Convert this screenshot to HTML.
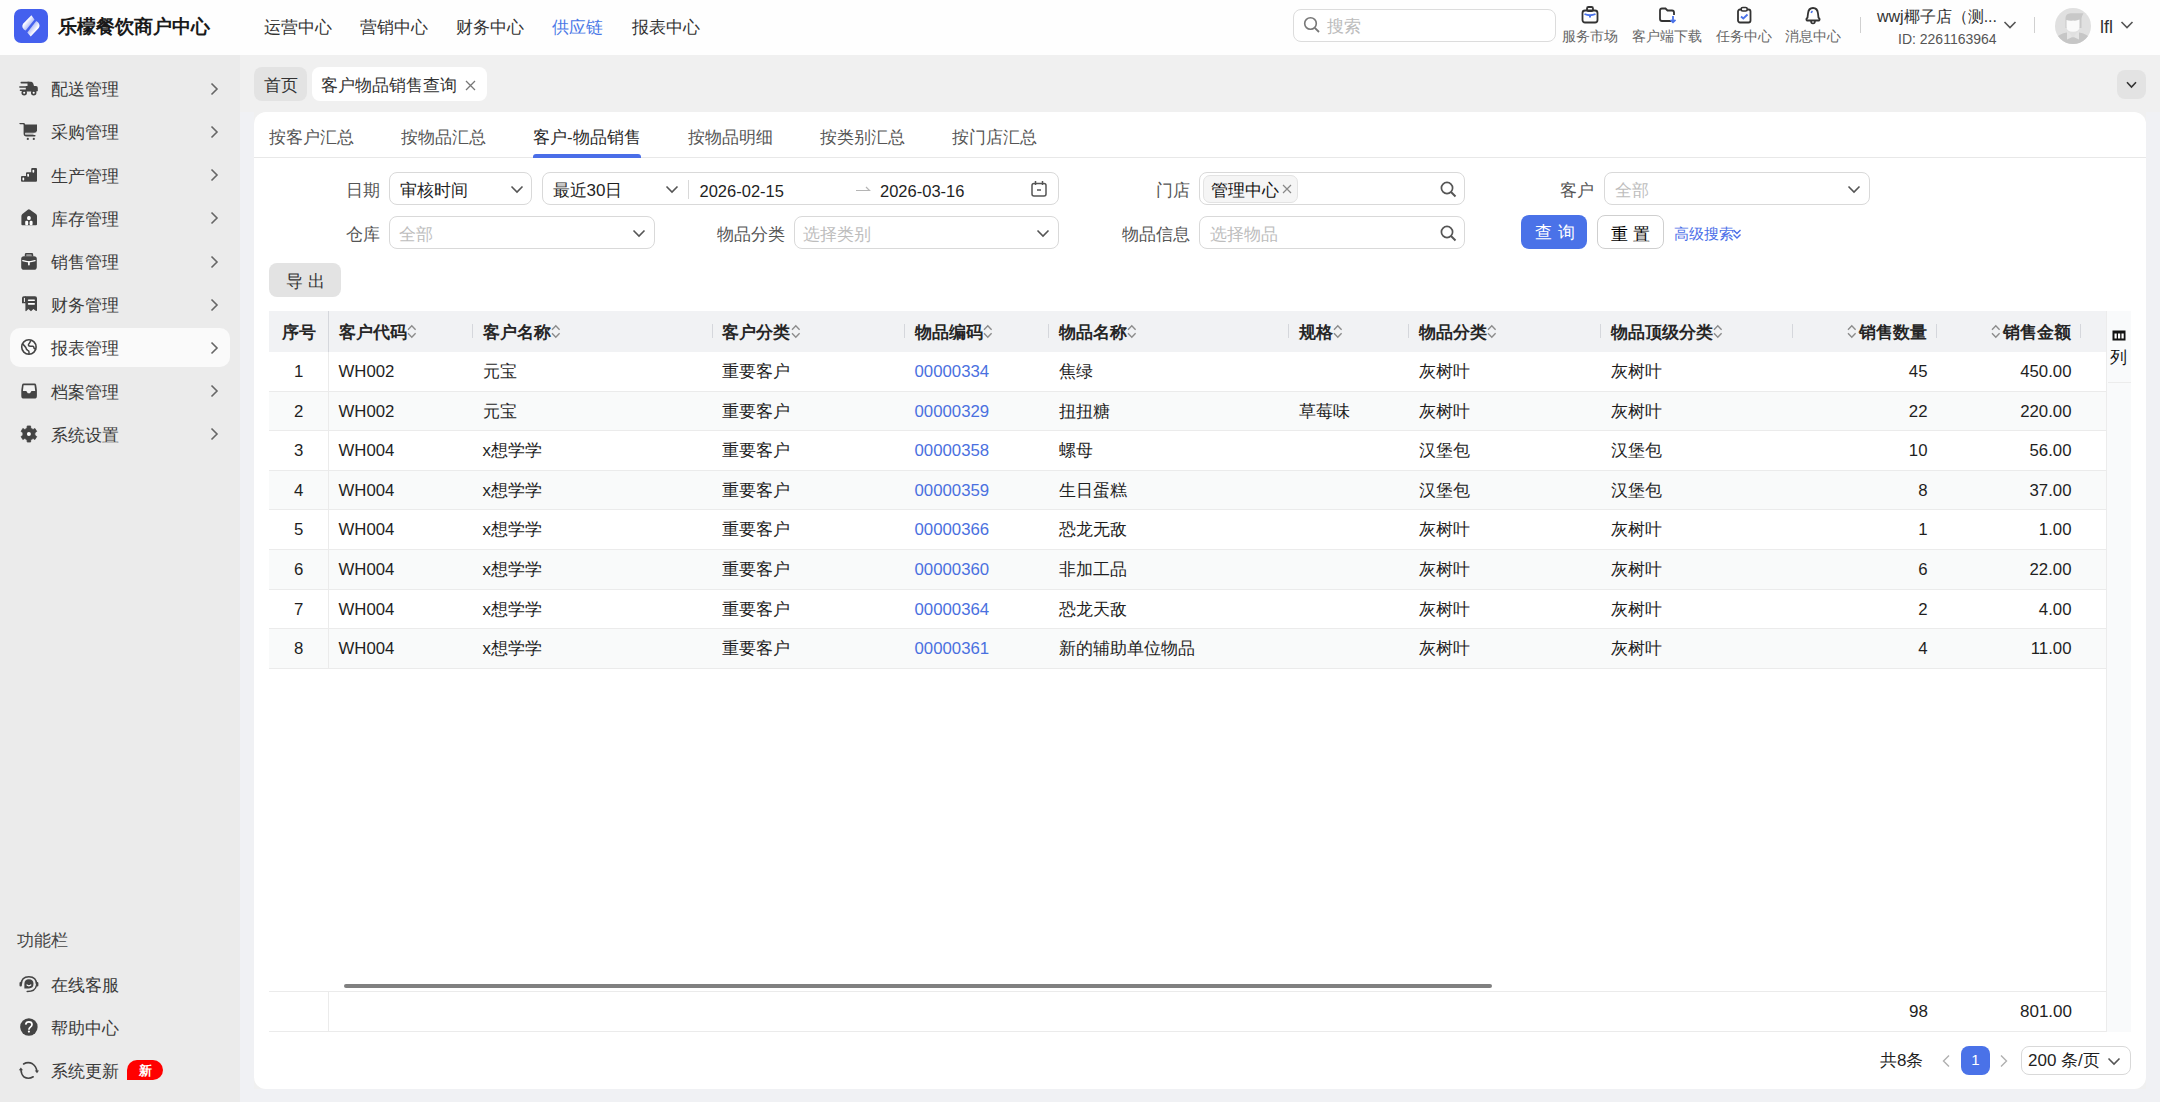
<!DOCTYPE html>
<html><head><meta charset="utf-8">
<style>
*{box-sizing:border-box;margin:0;padding:0}
html,body{width:2160px;height:1102px;overflow:hidden;font-family:"Liberation Sans",sans-serif;color:#1f1f1f;background:#f0f1f4}
.a{position:absolute;white-space:nowrap}
#hdr{position:absolute;left:0;top:0;width:2160px;height:55px;background:#fefefe}
#side{position:absolute;left:0;top:55px;width:240px;height:1047px;background:#ebebeb}
#tabbar{position:absolute;left:240px;top:55px;width:1920px;height:57px;background:#f0f0f0}
.nav{position:absolute;top:18px;font-size:17px;line-height:20px;color:#333}
.hi{position:absolute;top:5px;width:80px;text-align:center}
.hi svg{display:block;margin:0 auto}
.hi div{font-size:14.4px;line-height:16px;color:#666;margin-top:3px}
.mi{position:absolute;left:0;width:240px;height:40px}
.mi .t{position:absolute;left:51px;top:10.5px;font-size:17px;line-height:22px;color:#3a3a3a}
.mi svg.ic{position:absolute;left:19px;top:11px}
.mi svg.ch{position:absolute;left:207px;top:13px}
#card{position:absolute;left:254px;top:112px;width:1892px;height:977px;background:#fff;border-radius:12px}
.tab{position:absolute;top:16px;font-size:17px;line-height:20px;color:#555}
.lbl{position:absolute;font-size:17px;line-height:20px;color:#555;text-align:right}
.inp{position:absolute;height:33px;border:1px solid #d9d9d9;border-radius:8px;background:#fff}
.inp .v{position:absolute;left:10px;top:6px;font-size:17px;line-height:20px;color:#1f1f1f}
.inp .ph{position:absolute;left:9px;top:6px;font-size:17px;line-height:20px;color:#bdbdbd}
.inp svg{position:absolute}
.th{position:absolute;top:0;height:40px;font-size:17px;line-height:40px;font-weight:bold;color:#262626}
.sep{position:absolute;top:13px;width:1px;height:15px;background:#d5d7dc}
.row{position:absolute;left:0;width:1837px;height:39.6px;border-bottom:1px solid #ececec}
.row.e{background:#fafafa}
.c{position:absolute;top:0;line-height:39px;font-size:17px;color:#1f1f1f}
.c.n{font-size:16.5px}
.c.r{text-align:right}
.c.b{color:#4a70e0}
</style></head><body>
<div id="hdr">
  <svg class="a" style="left:14px;top:9px" width="34" height="34" viewBox="0 0 34 34">
    <defs><linearGradient id="g1" x1="0" y1="0" x2="1" y2="1"><stop offset="0.35" stop-color="#fff"/><stop offset="0.75" stop-color="#fff" stop-opacity="0.45"/></linearGradient>
    <linearGradient id="g2" x1="1" y1="1" x2="0" y2="0"><stop offset="0.35" stop-color="#fff"/><stop offset="0.75" stop-color="#fff" stop-opacity="0.45"/></linearGradient></defs>
    <rect width="34" height="34" rx="7" fill="#4460ee"/>
    <path d="M17.4 6.3 L20.5 10.6 L11.7 21.6 C8.5 20 7.2 17 9.6 14.2 Z" fill="url(#g1)"/>
    <path d="M16.7 27.5 L13.3 23.5 L22.2 12 C25.4 13.8 26.6 17 24.3 19.6 Z" fill="url(#g2)"/>
  </svg>
  <div class="a" style="left:58px;top:15px;font-size:19px;line-height:24px;font-weight:bold;color:#1a1a1a">乐檬餐饮商户中心</div>
  <div class="nav" style="left:264px">运营中心</div>
  <div class="nav" style="left:360px">营销中心</div>
  <div class="nav" style="left:456px">财务中心</div>
  <div class="nav" style="left:552px;color:#4a78e6">供应链</div>
  <div class="nav" style="left:632px">报表中心</div>

  <div class="a" style="left:1293px;top:9px;width:263px;height:33px;border:1px solid #dcdcdc;border-radius:8px;background:#fff"></div>
  <svg class="a" style="left:1303px;top:16px" width="18" height="18" viewBox="0 0 18 18"><circle cx="7.5" cy="7.5" r="5.8" fill="none" stroke="#777" stroke-width="1.6"/><path d="M11.8 11.8 L16 16" stroke="#777" stroke-width="1.8"/></svg>
  <div class="a" style="left:1327px;top:17px;font-size:17px;line-height:20px;color:#bbb">搜索</div>

  <div class="hi" style="left:1550px">
    <svg width="20" height="20" viewBox="0 0 20 20"><rect x="2.5" y="5.5" width="15" height="12" rx="2.5" fill="none" stroke="#333" stroke-width="1.8"/><rect x="7" y="2" width="6" height="4" rx="1.5" fill="none" stroke="#333" stroke-width="1.8"/><path d="M4.5 9 Q10 11.5 15.5 9" fill="none" stroke="#4a72e8" stroke-width="1.8"/><path d="M10 10.5 V12.5" stroke="#4a72e8" stroke-width="2"/></svg>
    <div>服务市场</div></div>
  <div class="hi" style="left:1627px">
    <svg width="20" height="20" viewBox="0 0 20 20"><path d="M14 16 H5 Q3 16 3 14 V5.5 Q3 3.5 5 3.5 H8.5 L10.5 5.5 H15 Q17 5.5 17 7.5 V10" fill="none" stroke="#333" stroke-width="1.8"/><path d="M16 11 V17 M13.5 14.8 L16 17.3 L18.5 14.8" fill="none" stroke="#4a72e8" stroke-width="1.8"/></svg>
    <div>客户端下载</div></div>
  <div class="hi" style="left:1704px">
    <svg width="20" height="20" viewBox="0 0 20 20"><rect x="4" y="4.5" width="12.5" height="13" rx="2" fill="none" stroke="#333" stroke-width="1.8"/><rect x="7.2" y="2.5" width="6" height="3.5" rx="1.5" fill="#fff" stroke="#333" stroke-width="1.6"/><path d="M7 11.5 L9.3 13.5 L13.5 9.5" fill="none" stroke="#4a72e8" stroke-width="1.8"/></svg>
    <div>任务中心</div></div>
  <div class="hi" style="left:1773px">
    <svg width="20" height="20" viewBox="0 0 20 20"><path d="M10 3 Q14.5 3 15 8.5 L15.5 12.5 Q17.5 14.5 16 15.5 H4 Q2.5 14.5 4.5 12.5 L5 8.5 Q5.5 3 10 3 Z" fill="none" stroke="#333" stroke-width="1.8"/><path d="M8 16 Q8 18.5 10 18.5 Q12 18.5 12 16" fill="none" stroke="#333" stroke-width="1.6"/><path d="M9.5 6 Q8.5 6.8 8.3 8" fill="none" stroke="#4a72e8" stroke-width="1.6"/></svg>
    <div>消息中心</div></div>
  <div class="a" style="left:1860px;top:17px;width:1px;height:16px;background:#d0d0d0"></div>
  <div class="a" style="left:1877px;top:7px;font-size:16px;line-height:20px;color:#333">wwj椰子店（测...</div>
  <div class="a" style="left:1898px;top:31px;font-size:14px;line-height:16px;color:#555">ID: 2261163964</div>
  <svg class="a" style="left:2003px;top:20px" width="14" height="10" viewBox="0 0 14 10"><path d="M1.5 2 L7 7.5 L12.5 2" fill="none" stroke="#555" stroke-width="1.6"/></svg>
  <div class="a" style="left:2034px;top:17px;width:1px;height:16px;background:#d0d0d0"></div>
  <svg class="a" style="left:2055px;top:8px" width="36" height="36" viewBox="0 0 36 36"><defs><clipPath id="av"><circle cx="18" cy="18" r="18"/></clipPath></defs><g clip-path="url(#av)"><rect width="36" height="36" fill="#e0e0e0"/>
<path d="M10.5 20 V10 Q10.8 5.5 15.5 5.2 H28.5 Q27 7.5 26.5 10.5 V20 Z" fill="#c8c8c8"/>
<path d="M11.5 12 Q14.5 13.2 18 12.6 Q21.5 13.2 24.5 11.6 V19 Q24.5 23.8 18 23.8 Q11.5 23.8 11.5 19 Z" fill="#fafafa"/>
<path d="M0 36 V31 Q4 25.5 12 24.5 L18 29.5 L24 24.5 Q32 25.5 36 31 V36 Z" fill="#c6c6c6"/>
<path d="M12 22.5 L18 29.5 L24 22.5 V31.5 L18 28.8 L12 31.5 Z" fill="#e4e4e4"/></g></svg>
  <div class="a" style="left:2100px;top:17px;font-size:18px;line-height:20px;color:#333">lfl</div>
  <svg class="a" style="left:2120px;top:20px" width="14" height="10" viewBox="0 0 14 10"><path d="M1.5 2 L7 7.5 L12.5 2" fill="none" stroke="#555" stroke-width="1.6"/></svg>
</div>

<div id="side">
<div class="mi" style="top:13.5px"><svg class="ic" width="20" height="20" viewBox="0 0 20 20"><path d="M2.3 2.65 H10 M0.9 7 H8 M1.5 10.2 H7" stroke="#444" stroke-width="1.6" stroke-linecap="round"/><path d="M8.5 1.8 H12.2 Q13.6 1.8 14.2 3.4 L15.1 6.2 H8.5 Z" fill="#444"/><path d="M6.8 6 H17 Q18.8 6 18.8 8 V10.2 Q18.8 11.6 17.4 11.6 H6.8 Z" fill="#444"/><circle cx="5.2" cy="12.7" r="1.9" fill="#fff" stroke="#444" stroke-width="1.7"/><circle cx="14.7" cy="12.7" r="1.9" fill="#fff" stroke="#444" stroke-width="1.7"/></svg><div class="t">配送管理</div><svg class="ch" width="14" height="14" viewBox="0 0 14 14"><path d="M4.5 1.5 L10 7 L4.5 12.5" fill="none" stroke="#666" stroke-width="1.6"/></svg></div>
<div class="mi" style="top:56.7px"><svg class="ic" width="20" height="20" viewBox="0 0 20 20"><path d="M1.2 0.5 H4.2 Q5.2 0.6 5.4 1.8 V10.8 Q5.5 12.8 7.3 12.8 H15.8" fill="none" stroke="#444" stroke-width="1.6" stroke-linecap="round"/><path d="M5.6 1.6 H18 V7.3 Q17.8 9.8 15.3 9.8 H5.8 Z" fill="#444"/><path d="M6.8 11.2 H14.5" stroke="#9a9a9a" stroke-width="1.3"/><circle cx="8.8" cy="15.9" r="1.1" fill="#444"/><circle cx="14.8" cy="15.9" r="1.1" fill="#444"/></svg><div class="t">采购管理</div><svg class="ch" width="14" height="14" viewBox="0 0 14 14"><path d="M4.5 1.5 L10 7 L4.5 12.5" fill="none" stroke="#666" stroke-width="1.6"/></svg></div>
<div class="mi" style="top:100.0px"><svg class="ic" width="20" height="20" viewBox="0 0 20 20"><path d="M2 11 Q2 10 3 10 H7 V7.2 Q7 6.2 8 6.2 H12.2 V3 Q12.2 2 13.2 2 H17 Q18 2 18 3 V14.8 Q18 15.8 17 15.8 H3 Q2 15.8 2 14.8 Z" fill="#444"/><rect x="3.5" y="11.6" width="1.7" height="3" rx="0.8" fill="#fff"/><rect x="8.3" y="7.8" width="1.7" height="3" rx="0.8" fill="#fff"/><rect x="13.5" y="3.8" width="1.7" height="3" rx="0.8" fill="#fff"/></svg><div class="t">生产管理</div><svg class="ch" width="14" height="14" viewBox="0 0 14 14"><path d="M4.5 1.5 L10 7 L4.5 12.5" fill="none" stroke="#666" stroke-width="1.6"/></svg></div>
<div class="mi" style="top:143.3px"><svg class="ic" width="20" height="20" viewBox="0 0 20 20"><path d="M9.9 0.3 Q10.4 0.3 11 0.8 L17 5 Q18 5.8 18 7 V15.3 Q18 16.3 17 16.3 H3.4 Q2.4 16.3 2.4 15.3 V7 Q2.4 5.8 3.4 5 L8.8 0.8 Q9.4 0.3 9.9 0.3 Z" fill="#444"/><rect x="8.1" y="7" width="3.6" height="4" rx="1.5" fill="#fff"/><rect x="6.2" y="11.8" width="3" height="4.5" rx="1.3" fill="#fff"/><rect x="10.6" y="11.8" width="3" height="4.5" rx="1.3" fill="#fff"/></svg><div class="t">库存管理</div><svg class="ch" width="14" height="14" viewBox="0 0 14 14"><path d="M4.5 1.5 L10 7 L4.5 12.5" fill="none" stroke="#666" stroke-width="1.6"/></svg></div>
<div class="mi" style="top:186.5px"><svg class="ic" width="20" height="20" viewBox="0 0 20 20"><path d="M6.5 3.5 V1.9 Q6.5 0.4 8.2 0.4 H11.8 Q13.5 0.4 13.5 1.9 V3.5" fill="#9a9a9a" stroke="#444" stroke-width="1.5"/><rect x="2.2" y="3.3" width="15.6" height="13.4" rx="2.8" fill="#444"/><path d="M3.8 7.6 Q7 8.6 9.9 8.9 Q12.8 8.6 16 7.6" fill="none" stroke="#fff" stroke-width="1.4" stroke-linecap="round"/><path d="M9.9 8.9 V11.6" stroke="#fff" stroke-width="1.7" stroke-linecap="round"/></svg><div class="t">销售管理</div><svg class="ch" width="14" height="14" viewBox="0 0 14 14"><path d="M4.5 1.5 L10 7 L4.5 12.5" fill="none" stroke="#666" stroke-width="1.6"/></svg></div>
<div class="mi" style="top:229.7px"><svg class="ic" width="20" height="20" viewBox="0 0 20 20"><path d="M3 2 Q3 0.2 4.8 0.2 H7 V7.3 H3 Z" fill="#444"/><rect x="4.9" y="1.9" width="1" height="4" fill="#fff"/><path d="M6.4 0.2 H16 Q18 0.2 18 2.2 V14.6 Q17.8 15.3 17 15 L14.4 12.9 L12 15.2 L9.4 12.9 L7 15.2 Q6.4 15.2 6.4 14.5 Z" fill="#444"/><path d="M9.6 4.3 H15.2 M9.6 7.9 H15.2" stroke="#fff" stroke-width="1.6" stroke-linecap="round"/></svg><div class="t">财务管理</div><svg class="ch" width="14" height="14" viewBox="0 0 14 14"><path d="M4.5 1.5 L10 7 L4.5 12.5" fill="none" stroke="#666" stroke-width="1.6"/></svg></div>
<div class="a" style="left:10px;top:273.3px;width:220px;height:39px;border-radius:10px;background:#fafafa"></div>
<div class="mi" style="top:272.8px"><svg class="ic" width="20" height="20" viewBox="0 0 20 20"><circle cx="9.9" cy="8" r="7.2" fill="none" stroke="#444" stroke-width="1.6"/><path d="M3.4 4.8 Q5.5 6.5 6.8 8.5 Q7.2 10.5 8.8 11.4 Q10 11.7 10 13 V15.3" fill="none" stroke="#444" stroke-width="1.5"/><path d="M12.3 1.2 Q11.5 2.5 10.5 4 Q9 5.5 9.5 6.5 Q10 7.3 12 7.2 H14 Q15 7.5 15 9.2 Q15.5 10.2 17.2 10" fill="none" stroke="#444" stroke-width="1.5"/></svg><div class="t">报表管理</div><svg class="ch" width="14" height="14" viewBox="0 0 14 14"><path d="M4.5 1.5 L10 7 L4.5 12.5" fill="none" stroke="#666" stroke-width="1.6"/></svg></div>
<div class="mi" style="top:316.0px"><svg class="ic" width="20" height="20" viewBox="0 0 20 20"><path d="M4.6 1.6 H15.6 Q16.8 1.6 17.2 3 L17.9 8 V14 Q17.9 16.6 15.3 16.6 H4.9 Q2.3 16.6 2.3 14 V8 L3 3 Q3.4 1.6 4.6 1.6 Z" fill="#444"/><path d="M4.6 3.2 H15.5 L16.2 9 H12.5 L11 11.2 H8.8 L7.3 9 H3.9 Z" fill="#f2f2f2"/></svg><div class="t">档案管理</div><svg class="ch" width="14" height="14" viewBox="0 0 14 14"><path d="M4.5 1.5 L10 7 L4.5 12.5" fill="none" stroke="#666" stroke-width="1.6"/></svg></div>
<div class="mi" style="top:359.2px"><svg class="ic" width="20" height="20" viewBox="0 0 20 20"><path d="M12.85 3.89 L11.74 2.98 L11.60 0.98 L8.20 0.98 L8.06 2.98 L6.95 3.89 L5.60 4.39 L3.81 3.51 L2.10 6.47 L3.76 7.58 L4.00 9.00 L3.76 10.42 L2.10 11.53 L3.81 14.49 L5.60 13.61 L6.95 14.11 L8.06 15.02 L8.20 17.02 L11.60 17.02 L11.74 15.02 L12.85 14.11 L14.20 13.61 L15.99 14.49 L17.70 11.53 L16.04 10.42 L15.80 9.00 L16.04 7.58 L17.70 6.47 L15.99 3.51 L14.20 4.39 Z" fill="#444" stroke="#444" stroke-width="0.8" stroke-linejoin="round"/><circle cx="9.9" cy="9.0" r="2" fill="#fff"/></svg><div class="t">系统设置</div><svg class="ch" width="14" height="14" viewBox="0 0 14 14"><path d="M4.5 1.5 L10 7 L4.5 12.5" fill="none" stroke="#666" stroke-width="1.6"/></svg></div>
<div class="a" style="left:17px;top:876px;font-size:17px;line-height:20px;color:#444">功能栏</div>
<div class="mi" style="top:909.0px"><svg class="ic" style="top:12px" width="20" height="20" viewBox="0 0 20 20" overflow="visible"><path d="M2.2 8.5 Q2.2 0.7 9.9 0.7 Q17.6 0.7 17.6 8.5" fill="none" stroke="#444" stroke-width="1.5"/><rect x="0.5" y="6" width="2.4" height="4.6" rx="1.1" fill="#444"/><rect x="17" y="6" width="2.4" height="4.6" rx="1.1" fill="#444"/><path d="M9.9 3.2 Q14.5 3.2 14.5 7.8 Q14.5 12.4 9.9 12.4 H5.4 V7.8 Q5.4 3.2 9.9 3.2 Z" fill="#444"/><path d="M7.6 8.6 Q9.9 11 12.2 8.6" fill="none" stroke="#fff" stroke-width="1.2"/><path d="M17.4 9.5 Q16.5 15.5 8.2 15.6" fill="none" stroke="#444" stroke-width="1.5" stroke-linecap="round"/></svg><div class="t">在线客服</div></div>
<div class="mi" style="top:952.0px"><svg class="ic" style="top:12px" width="20" height="20" viewBox="0 0 20 20" overflow="visible"><circle cx="9.9" cy="8" r="8.75" fill="#444"/><path d="M6.7 5.6 Q7 2.9 9.9 2.9 Q13 2.9 13 5.4 Q13 6.9 11.4 8.1 Q9.9 9.3 9.9 10.7" fill="none" stroke="#fff" stroke-width="1.7"/><circle cx="9.9" cy="12.6" r="1.1" fill="#fff"/></svg><div class="t">帮助中心</div></div>
<div class="mi" style="top:995.0px"><svg class="ic" style="top:12px" width="20" height="20" viewBox="0 0 20 20" overflow="visible"><path d="M4.6 2 Q9 -0.6 13.5 1.8 Q17.2 4.2 17.8 9" fill="none" stroke="#444" stroke-width="1.6" stroke-linecap="round"/><path d="M15.8 8.6 L20 8.6 L18 11.2 Z" fill="#444"/><path d="M14.2 14.8 Q9.5 17.6 5 15 Q2.2 12.5 1.9 7.8" fill="none" stroke="#444" stroke-width="1.6" stroke-linecap="round"/><path d="M-0.2 8.2 L4 8.2 L1.9 5.4 Z" fill="#444"/></svg><div class="t">系统更新</div></div>
<div class="a" style="left:127px;top:1005px;width:36px;height:20px;background:#f00;border-radius:10px 10px 10px 0;color:#fff;font-size:13px;line-height:21px;font-weight:bold;text-align:center">新</div>
</div>

<div id="tabbar">
  <div class="a" style="left:14px;top:12px;width:53px;height:34px;border-radius:8px;background:#e3e3e3"></div>
  <div class="a" style="left:24px;top:20.5px;font-size:17px;line-height:20px;color:#333">首页</div>
  <div class="a" style="left:72px;top:12px;width:175px;height:34px;border-radius:8px;background:#fff"></div>
  <div class="a" style="left:81px;top:20.5px;font-size:17px;line-height:20px;color:#333">客户物品销售查询</div>
  <svg class="a" style="left:225px;top:25px" width="11" height="11" viewBox="0 0 11 11"><path d="M1 1 L10 10 M10 1 L1 10" stroke="#777" stroke-width="1.3"/></svg>
  <div class="a" style="left:1877px;top:15px;width:29px;height:29px;border-radius:8px;background:#e3e3e3"></div>
  <svg class="a" style="left:1886px;top:26px" width="11" height="8" viewBox="0 0 11 8"><path d="M1 1.2 L5.5 6 L10 1.2" fill="none" stroke="#333" stroke-width="1.6"/></svg>
</div>

<div class="a" style="left:254px;top:112px;width:1892px;height:977px;background:#f0f0f0"></div>
<div id="card">
<div class="a" style="left:15.00px;top:15.50px;font-size:17px;line-height:20px;color:#555">按客户汇总</div>
<div class="a" style="left:147.00px;top:15.50px;font-size:17px;line-height:20px;color:#555">按物品汇总</div>
<div class="a" style="left:279.00px;top:15.50px;font-size:17px;line-height:20px;color:#2a2a2a">客户-物品销售</div>
<div class="a" style="left:434.00px;top:15.50px;font-size:17px;line-height:20px;color:#555">按物品明细</div>
<div class="a" style="left:566.00px;top:15.50px;font-size:17px;line-height:20px;color:#555">按类别汇总</div>
<div class="a" style="left:698.00px;top:15.50px;font-size:17px;line-height:20px;color:#555">按门店汇总</div>
<div class="a" style="left:0.00px;top:45.00px;width:1892.00px;height:1.00px;background:#e8e8e8"></div>
<div class="a" style="left:279.00px;top:42.00px;width:108.00px;height:4.00px;background:#4a6ee8;border-radius:3px 3px 0 0"></div>
<div class="a" style="left:-74.00px;top:68.50px;width:200px;text-align:right;font-size:17px;line-height:20px;color:#555">日期</div>
<div class="a" style="left:135.00px;top:60.00px;width:143.00px;height:33.00px;border:1px solid #d9d9d9;border-radius:8px;background:#fff"></div>
<div class="a" style="left:146.00px;top:68.50px;font-size:17px;line-height:20px;color:#1f1f1f">审核时间</div>
<svg class="a" style="left:255.50px;top:73.00px" width="14" height="9" viewBox="0 0 14 9"><path d="M1.5 1.5 L7 7 L12.5 1.5" fill="none" stroke="#555" stroke-width="1.6"/></svg>
<div class="a" style="left:288.00px;top:60.00px;width:517.00px;height:33.00px;border:1px solid #d9d9d9;border-radius:8px;background:#fff"></div>
<div class="a" style="left:298.50px;top:68.50px;font-size:17px;line-height:20px;color:#1f1f1f">最近30日</div>
<svg class="a" style="left:410.50px;top:73.00px" width="14" height="9" viewBox="0 0 14 9"><path d="M1.5 1.5 L7 7 L12.5 1.5" fill="none" stroke="#555" stroke-width="1.6"/></svg>
<div class="a" style="left:434.00px;top:68.00px;width:1.00px;height:19.00px;background:#d9d9d9"></div>
<div class="a" style="left:445.50px;top:68.50px;font-size:16.5px;line-height:20px;color:#1f1f1f">2026-02-15</div>
<svg class="a" style="left:601px;top:72px" width="16" height="8" viewBox="0 0 16 8"><path d="M1 6.5 H14.5 L11 3" fill="none" stroke="#b5b5b5" stroke-width="1.2"/></svg>
<div class="a" style="left:626.00px;top:68.50px;font-size:16.5px;line-height:20px;color:#1f1f1f">2026-03-16</div>
<svg class="a" style="left:776px;top:68px" width="18" height="18" viewBox="0 0 18 18"><rect x="2" y="3.5" width="14" height="12.5" rx="2" fill="none" stroke="#555" stroke-width="1.5"/><path d="M5.5 1 V5 M12.5 1 V5 M7 10 H11" stroke="#555" stroke-width="1.5"/></svg>
<div class="a" style="left:736.00px;top:68.50px;width:200px;text-align:right;font-size:17px;line-height:20px;color:#555">门店</div>
<div class="a" style="left:945.00px;top:60.00px;width:266.00px;height:33.00px;border:1px solid #d9d9d9;border-radius:8px;background:#fff"></div>
<div class="a" style="left:948.50px;top:63.00px;width:95.00px;height:27.50px;background:#f5f5f5;border:1px solid #e3e3e3;border-radius:7px"></div>
<div class="a" style="left:957.00px;top:68.50px;font-size:17px;line-height:20px;color:#111">管理中心</div>
<svg class="a" style="left:1028px;top:71.5px" width="10" height="10" viewBox="0 0 10 10"><path d="M1 1 L9 9 M9 1 L1 9" stroke="#888" stroke-width="1.2"/></svg>
<svg class="a" style="left:1186.00px;top:69.00px" width="17" height="17" viewBox="0 0 17 17"><circle cx="7" cy="7" r="5.6" fill="none" stroke="#555" stroke-width="1.7"/><path d="M11 11 L15.5 15.5" stroke="#555" stroke-width="1.9"/></svg>
<div class="a" style="left:1140.00px;top:68.50px;width:200px;text-align:right;font-size:17px;line-height:20px;color:#555">客户</div>
<div class="a" style="left:1350.00px;top:60.00px;width:266.00px;height:33.00px;border:1px solid #d9d9d9;border-radius:8px;background:#fff"></div>
<div class="a" style="left:1360.50px;top:68.50px;font-size:17px;line-height:20px;color:#bdbdbd">全部</div>
<svg class="a" style="left:1592.50px;top:73.00px" width="14" height="9" viewBox="0 0 14 9"><path d="M1.5 1.5 L7 7 L12.5 1.5" fill="none" stroke="#555" stroke-width="1.6"/></svg>
<div class="a" style="left:-74.00px;top:112.50px;width:200px;text-align:right;font-size:17px;line-height:20px;color:#555">仓库</div>
<div class="a" style="left:135.00px;top:104.00px;width:266.00px;height:33.00px;border:1px solid #d9d9d9;border-radius:8px;background:#fff"></div>
<div class="a" style="left:144.50px;top:112.50px;font-size:17px;line-height:20px;color:#bdbdbd">全部</div>
<svg class="a" style="left:377.50px;top:117.00px" width="14" height="9" viewBox="0 0 14 9"><path d="M1.5 1.5 L7 7 L12.5 1.5" fill="none" stroke="#555" stroke-width="1.6"/></svg>
<div class="a" style="left:331.00px;top:112.50px;width:200px;text-align:right;font-size:17px;line-height:20px;color:#555">物品分类</div>
<div class="a" style="left:540.00px;top:104.00px;width:265.00px;height:33.00px;border:1px solid #d9d9d9;border-radius:8px;background:#fff"></div>
<div class="a" style="left:549.00px;top:112.50px;font-size:17px;line-height:20px;color:#bdbdbd">选择类别</div>
<svg class="a" style="left:782.00px;top:117.00px" width="14" height="9" viewBox="0 0 14 9"><path d="M1.5 1.5 L7 7 L12.5 1.5" fill="none" stroke="#555" stroke-width="1.6"/></svg>
<div class="a" style="left:736.00px;top:112.50px;width:200px;text-align:right;font-size:17px;line-height:20px;color:#555">物品信息</div>
<div class="a" style="left:945.00px;top:104.00px;width:266.00px;height:33.00px;border:1px solid #d9d9d9;border-radius:8px;background:#fff"></div>
<div class="a" style="left:956.00px;top:112.50px;font-size:17px;line-height:20px;color:#bdbdbd">选择物品</div>
<svg class="a" style="left:1186.00px;top:113.00px" width="17" height="17" viewBox="0 0 17 17"><circle cx="7" cy="7" r="5.6" fill="none" stroke="#555" stroke-width="1.7"/><path d="M11 11 L15.5 15.5" stroke="#555" stroke-width="1.9"/></svg>
<div class="a" style="left:1267.00px;top:103.00px;width:66.00px;height:34.00px;background:#4a72e8;border-radius:8px"></div>
<div class="a" style="left:1281.00px;top:111.00px;font-size:17px;line-height:20px;color:#fff;letter-spacing:6px">查询</div>
<div class="a" style="left:1343.00px;top:103.00px;width:67.00px;height:34.00px;border:1px solid #cfcfcf;border-radius:8px;background:#fff"></div>
<div class="a" style="left:1357.00px;top:112.50px;font-size:17px;line-height:20px;color:#000;letter-spacing:5px">重置</div>
<div class="a" style="left:1420.00px;top:112.50px;font-size:14.5px;line-height:18px;color:#4a6ee8">高级搜索</div>
<svg class="a" style="left:1478px;top:115px" width="10" height="14" viewBox="0 0 10 14"><path d="M1.5 3 L5 6.5 L8.5 3 M1.5 7.5 L5 11 L8.5 7.5" fill="none" stroke="#4a6ee8" stroke-width="1.4"/></svg>
<div class="a" style="left:15.00px;top:151.00px;width:72.00px;height:34.00px;background:#e3e3e3;border-radius:8px"></div>
<div class="a" style="left:32.00px;top:159.50px;font-size:17px;line-height:20px;color:#333;letter-spacing:5px">导出</div>
<div class="a" style="left:15.00px;top:199.00px;width:1837.00px;height:40.50px;background:#f1f2f4"></div>
<div class="a" style="left:1852.00px;top:199.00px;width:25.00px;height:720.50px;background:#f9fafb"></div>
<div class="a" style="left:1852.00px;top:199.00px;width:1.00px;height:720.50px;background:#ececec"></div>
<div class="a" style="left:1854.00px;top:270.00px;width:23.00px;height:1.00px;background:#ececec"></div>
<svg class="a" style="left:1858px;top:218px" width="14" height="11" viewBox="0 0 14 11"><rect x="0.5" y="0.5" width="13" height="10" fill="#111"/><rect x="2.5" y="3.5" width="2.2" height="5" fill="#fff"/><rect x="6" y="3.5" width="2.2" height="5" fill="#fff"/><rect x="9.5" y="3.5" width="2.2" height="5" fill="#fff"/></svg>
<div class="a" style="left:1856.00px;top:236.00px;font-size:17px;line-height:20px;color:#111">列</div>
<div class="a" style="left:28.00px;top:211.00px;font-size:17px;line-height:20px;font-weight:bold;color:#262626">序号</div>
<div class="a" style="left:84.50px;top:211.00px;font-size:17px;line-height:20px;font-weight:bold;color:#262626">客户代码</div>
<svg class="a" style="left:153.00px;top:211.50px" width="10" height="15" viewBox="0 0 10 15"><path d="M1 5.8 L4.8 1.8 L8.6 5.8 M1 9.2 L4.8 13.2 L8.6 9.2" fill="none" stroke="#8c8c8c" stroke-width="1.4"/></svg>
<div class="a" style="left:218.00px;top:212.00px;width:1.00px;height:14.00px;background:#d5d7dc"></div>
<div class="a" style="left:228.50px;top:211.00px;font-size:17px;line-height:20px;font-weight:bold;color:#262626">客户名称</div>
<svg class="a" style="left:297.00px;top:211.50px" width="10" height="15" viewBox="0 0 10 15"><path d="M1 5.8 L4.8 1.8 L8.6 5.8 M1 9.2 L4.8 13.2 L8.6 9.2" fill="none" stroke="#8c8c8c" stroke-width="1.4"/></svg>
<div class="a" style="left:457.50px;top:212.00px;width:1.00px;height:14.00px;background:#d5d7dc"></div>
<div class="a" style="left:468.00px;top:211.00px;font-size:17px;line-height:20px;font-weight:bold;color:#262626">客户分类</div>
<svg class="a" style="left:536.50px;top:211.50px" width="10" height="15" viewBox="0 0 10 15"><path d="M1 5.8 L4.8 1.8 L8.6 5.8 M1 9.2 L4.8 13.2 L8.6 9.2" fill="none" stroke="#8c8c8c" stroke-width="1.4"/></svg>
<div class="a" style="left:650.00px;top:212.00px;width:1.00px;height:14.00px;background:#d5d7dc"></div>
<div class="a" style="left:660.50px;top:211.00px;font-size:17px;line-height:20px;font-weight:bold;color:#262626">物品编码</div>
<svg class="a" style="left:729.00px;top:211.50px" width="10" height="15" viewBox="0 0 10 15"><path d="M1 5.8 L4.8 1.8 L8.6 5.8 M1 9.2 L4.8 13.2 L8.6 9.2" fill="none" stroke="#8c8c8c" stroke-width="1.4"/></svg>
<div class="a" style="left:794.00px;top:212.00px;width:1.00px;height:14.00px;background:#d5d7dc"></div>
<div class="a" style="left:804.50px;top:211.00px;font-size:17px;line-height:20px;font-weight:bold;color:#262626">物品名称</div>
<svg class="a" style="left:873.00px;top:211.50px" width="10" height="15" viewBox="0 0 10 15"><path d="M1 5.8 L4.8 1.8 L8.6 5.8 M1 9.2 L4.8 13.2 L8.6 9.2" fill="none" stroke="#8c8c8c" stroke-width="1.4"/></svg>
<div class="a" style="left:1034.00px;top:212.00px;width:1.00px;height:14.00px;background:#d5d7dc"></div>
<div class="a" style="left:1044.50px;top:211.00px;font-size:17px;line-height:20px;font-weight:bold;color:#262626">规格</div>
<svg class="a" style="left:1079.00px;top:211.50px" width="10" height="15" viewBox="0 0 10 15"><path d="M1 5.8 L4.8 1.8 L8.6 5.8 M1 9.2 L4.8 13.2 L8.6 9.2" fill="none" stroke="#8c8c8c" stroke-width="1.4"/></svg>
<div class="a" style="left:1154.00px;top:212.00px;width:1.00px;height:14.00px;background:#d5d7dc"></div>
<div class="a" style="left:1164.50px;top:211.00px;font-size:17px;line-height:20px;font-weight:bold;color:#262626">物品分类</div>
<svg class="a" style="left:1233.00px;top:211.50px" width="10" height="15" viewBox="0 0 10 15"><path d="M1 5.8 L4.8 1.8 L8.6 5.8 M1 9.2 L4.8 13.2 L8.6 9.2" fill="none" stroke="#8c8c8c" stroke-width="1.4"/></svg>
<div class="a" style="left:1346.00px;top:212.00px;width:1.00px;height:14.00px;background:#d5d7dc"></div>
<div class="a" style="left:1356.50px;top:211.00px;font-size:17px;line-height:20px;font-weight:bold;color:#262626">物品顶级分类</div>
<svg class="a" style="left:1459.00px;top:211.50px" width="10" height="15" viewBox="0 0 10 15"><path d="M1 5.8 L4.8 1.8 L8.6 5.8 M1 9.2 L4.8 13.2 L8.6 9.2" fill="none" stroke="#8c8c8c" stroke-width="1.4"/></svg>
<div class="a" style="left:1538.00px;top:212.00px;width:1.00px;height:14.00px;background:#d5d7dc"></div>
<div class="a" style="left:1604.50px;top:211.00px;font-size:17px;line-height:20px;font-weight:bold;color:#262626">销售数量</div>
<svg class="a" style="left:1593.00px;top:211.50px" width="10" height="15" viewBox="0 0 10 15"><path d="M1 5.8 L4.8 1.8 L8.6 5.8 M1 9.2 L4.8 13.2 L8.6 9.2" fill="none" stroke="#8c8c8c" stroke-width="1.4"/></svg>
<div class="a" style="left:1682.00px;top:212.00px;width:1.00px;height:14.00px;background:#d5d7dc"></div>
<div class="a" style="left:1748.50px;top:211.00px;font-size:17px;line-height:20px;font-weight:bold;color:#262626">销售金额</div>
<svg class="a" style="left:1737.00px;top:211.50px" width="10" height="15" viewBox="0 0 10 15"><path d="M1 5.8 L4.8 1.8 L8.6 5.8 M1 9.2 L4.8 13.2 L8.6 9.2" fill="none" stroke="#8c8c8c" stroke-width="1.4"/></svg>
<div class="a" style="left:1826.00px;top:212.00px;width:1.00px;height:14.00px;background:#d5d7dc"></div>
<div class="a" style="left:74.00px;top:199.00px;width:1.00px;height:40.50px;background:#d5d7dc"></div>
<div class="a" style="left:15.00px;top:279.00px;width:1837.00px;height:1.00px;background:#ebebeb"></div>
<div class="a" style="left:74.00px;top:239.50px;width:1.00px;height:39.50px;background:#ebebeb"></div>
<div class="a" style="left:15.00px;top:249.50px;width:59.50px;text-align:center;font-size:16.8px;line-height:20px;color:#1f1f1f">1</div>
<div class="a" style="left:84.50px;top:249.50px;font-size:16.8px;line-height:20px;color:#1f1f1f">WH002</div>
<div class="a" style="left:228.50px;top:249.50px;font-size:16.8px;line-height:20px;color:#1f1f1f">元宝</div>
<div class="a" style="left:468.00px;top:249.50px;font-size:16.8px;line-height:20px;color:#1f1f1f">重要客户</div>
<div class="a" style="left:660.50px;top:249.50px;font-size:16.8px;line-height:20px;color:#4a70e0">00000334</div>
<div class="a" style="left:804.50px;top:249.50px;font-size:16.8px;line-height:20px;color:#1f1f1f">焦绿</div>
<div class="a" style="left:1164.50px;top:249.50px;font-size:16.8px;line-height:20px;color:#1f1f1f">灰树叶</div>
<div class="a" style="left:1356.50px;top:249.50px;font-size:16.8px;line-height:20px;color:#1f1f1f">灰树叶</div>
<div class="a" style="left:1473.50px;top:249.50px;width:200px;text-align:right;font-size:16.8px;line-height:20px;color:#1f1f1f">45</div>
<div class="a" style="left:1617.50px;top:249.50px;width:200px;text-align:right;font-size:16.8px;line-height:20px;color:#1f1f1f">450.00</div>
<div class="a" style="left:15.00px;top:280.00px;width:1837.00px;height:38.00px;background:#f9fafa"></div>
<div class="a" style="left:15.00px;top:318.00px;width:1837.00px;height:1.00px;background:#ebebeb"></div>
<div class="a" style="left:74.00px;top:280.00px;width:1.00px;height:38.00px;background:#ebebeb"></div>
<div class="a" style="left:15.00px;top:289.50px;width:59.50px;text-align:center;font-size:16.8px;line-height:20px;color:#1f1f1f">2</div>
<div class="a" style="left:84.50px;top:289.50px;font-size:16.8px;line-height:20px;color:#1f1f1f">WH002</div>
<div class="a" style="left:228.50px;top:289.50px;font-size:16.8px;line-height:20px;color:#1f1f1f">元宝</div>
<div class="a" style="left:468.00px;top:289.50px;font-size:16.8px;line-height:20px;color:#1f1f1f">重要客户</div>
<div class="a" style="left:660.50px;top:289.50px;font-size:16.8px;line-height:20px;color:#4a70e0">00000329</div>
<div class="a" style="left:804.50px;top:289.50px;font-size:16.8px;line-height:20px;color:#1f1f1f">扭扭糖</div>
<div class="a" style="left:1044.50px;top:289.50px;font-size:16.8px;line-height:20px;color:#1f1f1f">草莓味</div>
<div class="a" style="left:1164.50px;top:289.50px;font-size:16.8px;line-height:20px;color:#1f1f1f">灰树叶</div>
<div class="a" style="left:1356.50px;top:289.50px;font-size:16.8px;line-height:20px;color:#1f1f1f">灰树叶</div>
<div class="a" style="left:1473.50px;top:289.50px;width:200px;text-align:right;font-size:16.8px;line-height:20px;color:#1f1f1f">22</div>
<div class="a" style="left:1617.50px;top:289.50px;width:200px;text-align:right;font-size:16.8px;line-height:20px;color:#1f1f1f">220.00</div>
<div class="a" style="left:15.00px;top:358.00px;width:1837.00px;height:1.00px;background:#ebebeb"></div>
<div class="a" style="left:74.00px;top:319.00px;width:1.00px;height:39.00px;background:#ebebeb"></div>
<div class="a" style="left:15.00px;top:328.50px;width:59.50px;text-align:center;font-size:16.8px;line-height:20px;color:#1f1f1f">3</div>
<div class="a" style="left:84.50px;top:328.50px;font-size:16.8px;line-height:20px;color:#1f1f1f">WH004</div>
<div class="a" style="left:228.50px;top:328.50px;font-size:16.8px;line-height:20px;color:#1f1f1f">x想学学</div>
<div class="a" style="left:468.00px;top:328.50px;font-size:16.8px;line-height:20px;color:#1f1f1f">重要客户</div>
<div class="a" style="left:660.50px;top:328.50px;font-size:16.8px;line-height:20px;color:#4a70e0">00000358</div>
<div class="a" style="left:804.50px;top:328.50px;font-size:16.8px;line-height:20px;color:#1f1f1f">螺母</div>
<div class="a" style="left:1164.50px;top:328.50px;font-size:16.8px;line-height:20px;color:#1f1f1f">汉堡包</div>
<div class="a" style="left:1356.50px;top:328.50px;font-size:16.8px;line-height:20px;color:#1f1f1f">汉堡包</div>
<div class="a" style="left:1473.50px;top:328.50px;width:200px;text-align:right;font-size:16.8px;line-height:20px;color:#1f1f1f">10</div>
<div class="a" style="left:1617.50px;top:328.50px;width:200px;text-align:right;font-size:16.8px;line-height:20px;color:#1f1f1f">56.00</div>
<div class="a" style="left:15.00px;top:359.00px;width:1837.00px;height:38.00px;background:#f9fafa"></div>
<div class="a" style="left:15.00px;top:397.00px;width:1837.00px;height:1.00px;background:#ebebeb"></div>
<div class="a" style="left:74.00px;top:359.00px;width:1.00px;height:38.00px;background:#ebebeb"></div>
<div class="a" style="left:15.00px;top:368.50px;width:59.50px;text-align:center;font-size:16.8px;line-height:20px;color:#1f1f1f">4</div>
<div class="a" style="left:84.50px;top:368.50px;font-size:16.8px;line-height:20px;color:#1f1f1f">WH004</div>
<div class="a" style="left:228.50px;top:368.50px;font-size:16.8px;line-height:20px;color:#1f1f1f">x想学学</div>
<div class="a" style="left:468.00px;top:368.50px;font-size:16.8px;line-height:20px;color:#1f1f1f">重要客户</div>
<div class="a" style="left:660.50px;top:368.50px;font-size:16.8px;line-height:20px;color:#4a70e0">00000359</div>
<div class="a" style="left:804.50px;top:368.50px;font-size:16.8px;line-height:20px;color:#1f1f1f">生日蛋糕</div>
<div class="a" style="left:1164.50px;top:368.50px;font-size:16.8px;line-height:20px;color:#1f1f1f">汉堡包</div>
<div class="a" style="left:1356.50px;top:368.50px;font-size:16.8px;line-height:20px;color:#1f1f1f">汉堡包</div>
<div class="a" style="left:1473.50px;top:368.50px;width:200px;text-align:right;font-size:16.8px;line-height:20px;color:#1f1f1f">8</div>
<div class="a" style="left:1617.50px;top:368.50px;width:200px;text-align:right;font-size:16.8px;line-height:20px;color:#1f1f1f">37.00</div>
<div class="a" style="left:15.00px;top:437.00px;width:1837.00px;height:1.00px;background:#ebebeb"></div>
<div class="a" style="left:74.00px;top:398.00px;width:1.00px;height:39.00px;background:#ebebeb"></div>
<div class="a" style="left:15.00px;top:407.50px;width:59.50px;text-align:center;font-size:16.8px;line-height:20px;color:#1f1f1f">5</div>
<div class="a" style="left:84.50px;top:407.50px;font-size:16.8px;line-height:20px;color:#1f1f1f">WH004</div>
<div class="a" style="left:228.50px;top:407.50px;font-size:16.8px;line-height:20px;color:#1f1f1f">x想学学</div>
<div class="a" style="left:468.00px;top:407.50px;font-size:16.8px;line-height:20px;color:#1f1f1f">重要客户</div>
<div class="a" style="left:660.50px;top:407.50px;font-size:16.8px;line-height:20px;color:#4a70e0">00000366</div>
<div class="a" style="left:804.50px;top:407.50px;font-size:16.8px;line-height:20px;color:#1f1f1f">恐龙无敌</div>
<div class="a" style="left:1164.50px;top:407.50px;font-size:16.8px;line-height:20px;color:#1f1f1f">灰树叶</div>
<div class="a" style="left:1356.50px;top:407.50px;font-size:16.8px;line-height:20px;color:#1f1f1f">灰树叶</div>
<div class="a" style="left:1473.50px;top:407.50px;width:200px;text-align:right;font-size:16.8px;line-height:20px;color:#1f1f1f">1</div>
<div class="a" style="left:1617.50px;top:407.50px;width:200px;text-align:right;font-size:16.8px;line-height:20px;color:#1f1f1f">1.00</div>
<div class="a" style="left:15.00px;top:438.00px;width:1837.00px;height:39.00px;background:#f9fafa"></div>
<div class="a" style="left:15.00px;top:477.00px;width:1837.00px;height:1.00px;background:#ebebeb"></div>
<div class="a" style="left:74.00px;top:438.00px;width:1.00px;height:39.00px;background:#ebebeb"></div>
<div class="a" style="left:15.00px;top:447.50px;width:59.50px;text-align:center;font-size:16.8px;line-height:20px;color:#1f1f1f">6</div>
<div class="a" style="left:84.50px;top:447.50px;font-size:16.8px;line-height:20px;color:#1f1f1f">WH004</div>
<div class="a" style="left:228.50px;top:447.50px;font-size:16.8px;line-height:20px;color:#1f1f1f">x想学学</div>
<div class="a" style="left:468.00px;top:447.50px;font-size:16.8px;line-height:20px;color:#1f1f1f">重要客户</div>
<div class="a" style="left:660.50px;top:447.50px;font-size:16.8px;line-height:20px;color:#4a70e0">00000360</div>
<div class="a" style="left:804.50px;top:447.50px;font-size:16.8px;line-height:20px;color:#1f1f1f">非加工品</div>
<div class="a" style="left:1164.50px;top:447.50px;font-size:16.8px;line-height:20px;color:#1f1f1f">灰树叶</div>
<div class="a" style="left:1356.50px;top:447.50px;font-size:16.8px;line-height:20px;color:#1f1f1f">灰树叶</div>
<div class="a" style="left:1473.50px;top:447.50px;width:200px;text-align:right;font-size:16.8px;line-height:20px;color:#1f1f1f">6</div>
<div class="a" style="left:1617.50px;top:447.50px;width:200px;text-align:right;font-size:16.8px;line-height:20px;color:#1f1f1f">22.00</div>
<div class="a" style="left:15.00px;top:516.00px;width:1837.00px;height:1.00px;background:#ebebeb"></div>
<div class="a" style="left:74.00px;top:478.00px;width:1.00px;height:38.00px;background:#ebebeb"></div>
<div class="a" style="left:15.00px;top:487.50px;width:59.50px;text-align:center;font-size:16.8px;line-height:20px;color:#1f1f1f">7</div>
<div class="a" style="left:84.50px;top:487.50px;font-size:16.8px;line-height:20px;color:#1f1f1f">WH004</div>
<div class="a" style="left:228.50px;top:487.50px;font-size:16.8px;line-height:20px;color:#1f1f1f">x想学学</div>
<div class="a" style="left:468.00px;top:487.50px;font-size:16.8px;line-height:20px;color:#1f1f1f">重要客户</div>
<div class="a" style="left:660.50px;top:487.50px;font-size:16.8px;line-height:20px;color:#4a70e0">00000364</div>
<div class="a" style="left:804.50px;top:487.50px;font-size:16.8px;line-height:20px;color:#1f1f1f">恐龙天敌</div>
<div class="a" style="left:1164.50px;top:487.50px;font-size:16.8px;line-height:20px;color:#1f1f1f">灰树叶</div>
<div class="a" style="left:1356.50px;top:487.50px;font-size:16.8px;line-height:20px;color:#1f1f1f">灰树叶</div>
<div class="a" style="left:1473.50px;top:487.50px;width:200px;text-align:right;font-size:16.8px;line-height:20px;color:#1f1f1f">2</div>
<div class="a" style="left:1617.50px;top:487.50px;width:200px;text-align:right;font-size:16.8px;line-height:20px;color:#1f1f1f">4.00</div>
<div class="a" style="left:15.00px;top:517.00px;width:1837.00px;height:39.00px;background:#f9fafa"></div>
<div class="a" style="left:15.00px;top:556.00px;width:1837.00px;height:1.00px;background:#ebebeb"></div>
<div class="a" style="left:74.00px;top:517.00px;width:1.00px;height:39.00px;background:#ebebeb"></div>
<div class="a" style="left:15.00px;top:526.50px;width:59.50px;text-align:center;font-size:16.8px;line-height:20px;color:#1f1f1f">8</div>
<div class="a" style="left:84.50px;top:526.50px;font-size:16.8px;line-height:20px;color:#1f1f1f">WH004</div>
<div class="a" style="left:228.50px;top:526.50px;font-size:16.8px;line-height:20px;color:#1f1f1f">x想学学</div>
<div class="a" style="left:468.00px;top:526.50px;font-size:16.8px;line-height:20px;color:#1f1f1f">重要客户</div>
<div class="a" style="left:660.50px;top:526.50px;font-size:16.8px;line-height:20px;color:#4a70e0">00000361</div>
<div class="a" style="left:804.50px;top:526.50px;font-size:16.8px;line-height:20px;color:#1f1f1f">新的辅助单位物品</div>
<div class="a" style="left:1164.50px;top:526.50px;font-size:16.8px;line-height:20px;color:#1f1f1f">灰树叶</div>
<div class="a" style="left:1356.50px;top:526.50px;font-size:16.8px;line-height:20px;color:#1f1f1f">灰树叶</div>
<div class="a" style="left:1473.50px;top:526.50px;width:200px;text-align:right;font-size:16.8px;line-height:20px;color:#1f1f1f">4</div>
<div class="a" style="left:1617.50px;top:526.50px;width:200px;text-align:right;font-size:16.8px;line-height:20px;color:#1f1f1f">11.00</div>
<div class="a" style="left:90.00px;top:872.00px;width:1148.00px;height:4.00px;background:#808080;border-radius:2px"></div>
<div class="a" style="left:15.00px;top:879.00px;width:1837.00px;height:1.00px;background:#ebebeb"></div>
<div class="a" style="left:15.00px;top:919.00px;width:1837.00px;height:1.00px;background:#ebebeb"></div>
<div class="a" style="left:74.00px;top:880.00px;width:1.00px;height:39.00px;background:#ebebeb"></div>
<div class="a" style="left:1474px;top:890px;width:200px;text-align:right;font-size:17px;line-height:20px;color:#1f1f1f">98</div>
<div class="a" style="left:1618px;top:890px;width:200px;text-align:right;font-size:17px;line-height:20px;color:#1f1f1f">801.00</div>
<div class="a" style="left:1626.00px;top:939.00px;font-size:17px;line-height:20px;color:#1f1f1f">共8条</div>
<svg class="a" style="left:1687px;top:942px" width="10" height="14" viewBox="0 0 10 14"><path d="M8 1.5 L2.5 7 L8 12.5" fill="none" stroke="#b0b0b0" stroke-width="1.4"/></svg>
<div class="a" style="left:1707.00px;top:934.00px;width:29.00px;height:29.00px;background:#4a72e8;border-radius:8px"></div>
<div class="a" style="left:1707.00px;top:938.00px;width:29px;text-align:center;font-size:15px;line-height:20px;color:#fff">1</div>
<svg class="a" style="left:1745px;top:942px" width="10" height="14" viewBox="0 0 10 14"><path d="M2 1.5 L7.5 7 L2 12.5" fill="none" stroke="#b0b0b0" stroke-width="1.4"/></svg>
<div class="a" style="left:1767.00px;top:934.00px;width:110.00px;height:29.00px;border:1px solid #d9d9d9;border-radius:8px;background:#fff"></div>
<div class="a" style="left:1774.00px;top:939.00px;font-size:17px;line-height:20px;color:#1f1f1f">200 条/页</div>
<svg class="a" style="left:1853.00px;top:945.00px" width="14" height="9" viewBox="0 0 14 9"><path d="M1.5 1.5 L7 7 L12.5 1.5" fill="none" stroke="#555" stroke-width="1.6"/></svg>
</div>
</body></html>
